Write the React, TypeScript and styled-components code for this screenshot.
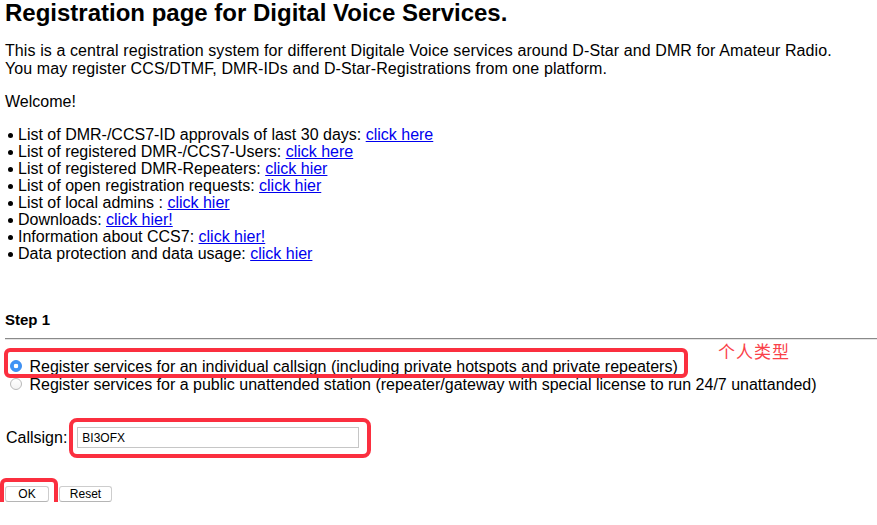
import React from "react";
import styled, { createGlobalStyle } from "styled-components";

const GlobalStyle = createGlobalStyle`
  html, body { background: #ffffff; }
  body {
    margin: 0;
    padding: 0 0 0 5px;
    font-family: "Liberation Sans", Arial, Helvetica, sans-serif;
    font-size: 16px;
    color: #000000;
  }
`;

const Page = styled.div`
  display: flex;
  flex-direction: column;
`;

const Title = styled.h2`
  margin: 0;
  font-size: 24px;
  line-height: 26px;
  font-weight: bold;
`;

const Intro = styled.p`
  margin: 16px 0 0;
  line-height: 18px;
  letter-spacing: 0.1px;
`;

const Welcome = styled.p`
  margin: 15px 0 0;
  line-height: 18px;
`;

const LinkList = styled.ul`
  margin: 15px 0 0;
  padding: 0 0 0 13px;
  line-height: 17px;
  list-style: none;
`;

const Item = styled.li`
  position: relative;
  &::before {
    content: "";
    position: absolute;
    left: -10px;
    top: 7px;
    width: 5px;
    height: 5px;
    border-radius: 50%;
    background: #000;
  }
`;

const Link = styled.a`
  color: #0000ee;
  text-decoration: underline;
`;

const StepTitle = styled.h4`
  margin: 49px 0 0;
  font-size: 15px;
  line-height: 18px;
  font-weight: bold;
`;

const Rule = styled.hr`
  margin: 9px 0 18px;
  height: 0;
  border: 0;
  border-top: 1px solid #8a8a8a;
  border-bottom: 1px solid #e4e4e4;
`;

const RadioRow = styled.label`
  position: relative;
  display: block;
  line-height: 18px;
  white-space: nowrap;
`;

const Radio = styled.input`
  appearance: none;
  -webkit-appearance: none;
  display: inline-block;
  box-sizing: border-box;
  width: 12px;
  height: 12px;
  margin: 0 3px 0 5px;
  vertical-align: 0px;
  border-radius: 50%;
  border: 1px solid ${(p) => (p.checked ? "#3a8cf0" : "#b9b9b9")};
  background: ${(p) =>
    p.checked
      ? "radial-gradient(circle, #ffffff 0 2px, #3f93f5 2.6px)"
      : "linear-gradient(#ffffff, #f3f3f3)"};
`;

const Annotation = styled.div<{
  $left: number;
  $top: number;
  $w: number;
  $h: number;
  $r: number;
}>`
  position: absolute;
  box-sizing: border-box;
  left: ${(p) => p.$left}px;
  top: ${(p) => p.$top}px;
  width: ${(p) => p.$w}px;
  height: ${(p) => p.$h}px;
  border: 4px solid #fb2f3f;
  border-radius: ${(p) => p.$r}px;
  pointer-events: none;
`;

const Note = styled.span`
  position: absolute;
  left: 713px;
  top: -17px;
  font-family: "Noto Sans CJK SC", sans-serif;
  font-size: 17px;
  line-height: 20px;
  color: #fa4149;
  letter-spacing: 1px;
`;

const FieldRow = styled.div`
  position: relative;
  display: flex;
  align-items: center;
  gap: 10px;
  margin-top: 33px;
  height: 21px;
`;

const FieldLabel = styled.span`
  margin-left: 1px;
`;

const TextInput = styled.input`
  box-sizing: border-box;
  width: 282px;
  height: 21px;
  margin: 0;
  padding: 0 4px;
  border: 1px solid #c6c6c6;
  font-family: "Liberation Sans", Arial, sans-serif;
  font-size: 12px;
  color: #000;
  background: #fff;
  outline: none;
`;

const ButtonRow = styled.div`
  position: relative;
  display: flex;
  gap: 10px;
  margin-top: 38px;
`;

const Button = styled.button<{ $w: number }>`
  box-sizing: border-box;
  width: ${(p) => p.$w}px;
  height: 16px;
  margin: 0;
  padding: 0;
  border: 1px solid #cdcdcd;
  border-bottom-color: #b5b5b5;
  border-radius: 3px;
  background: #ffffff;
  font-family: "Liberation Sans", Arial, sans-serif;
  font-size: 12px;
  line-height: 14px;
  color: #000;
`;

const links: [string, string][] = [
  ["List of DMR-/CCS7-ID approvals of last 30 days: ", "click here"],
  ["List of registered DMR-/CCS7-Users: ", "click here"],
  ["List of registered DMR-Repeaters: ", "click hier"],
  ["List of open registration requests: ", "click hier"],
  ["List of local admins : ", "click hier"],
  ["Downloads: ", "click hier!"],
  ["Information about CCS7: ", "click hier!"],
  ["Data protection and data usage: ", "click hier"],
];

export default function App() {
  return (
    <Page>
      <GlobalStyle />
      <Title>Registration page for Digital Voice Services.</Title>
      <Intro>
        This is a central registration system for different Digitale Voice services around D-Star and DMR for Amateur Radio.
        <br />
        You may register CCS/DTMF, DMR-IDs and D-Star-Registrations from one platform.
      </Intro>
      <Welcome>Welcome!</Welcome>
      <LinkList>
        {links.map(([label, link]) => (
          <Item key={label}>
            {label}
            <Link href="#">{link}</Link>
          </Item>
        ))}
      </LinkList>
      <StepTitle>Step 1</StepTitle>
      <Rule />
      <RadioRow>
        <Radio type="radio" name="kind" checked readOnly /> Register services for an individual callsign (including private hotspots and private repeaters)
        <Annotation $left={-1} $top={-10} $w={684} $h={30} $r={6} />
        <Note>个人类型</Note>
      </RadioRow>
      <RadioRow>
        <Radio type="radio" name="kind" checked={false} readOnly /> Register services for a public unattended station (repeater/gateway with special license to run 24/7 unattanded)
      </RadioRow>
      <FieldRow>
        <FieldLabel>Callsign:</FieldLabel>
        <TextInput type="text" defaultValue="BI3OFX" />
        <Annotation $left={64} $top={-9} $w={302} $h={40} $r={8} />
      </FieldRow>
      <ButtonRow>
        <Button $w={44}>OK</Button>
        <Button $w={53} type="reset">Reset</Button>
        <Annotation $left={-5} $top={-8} $w={58} $h={34} $r={6} />
      </ButtonRow>
    </Page>
  );
}
